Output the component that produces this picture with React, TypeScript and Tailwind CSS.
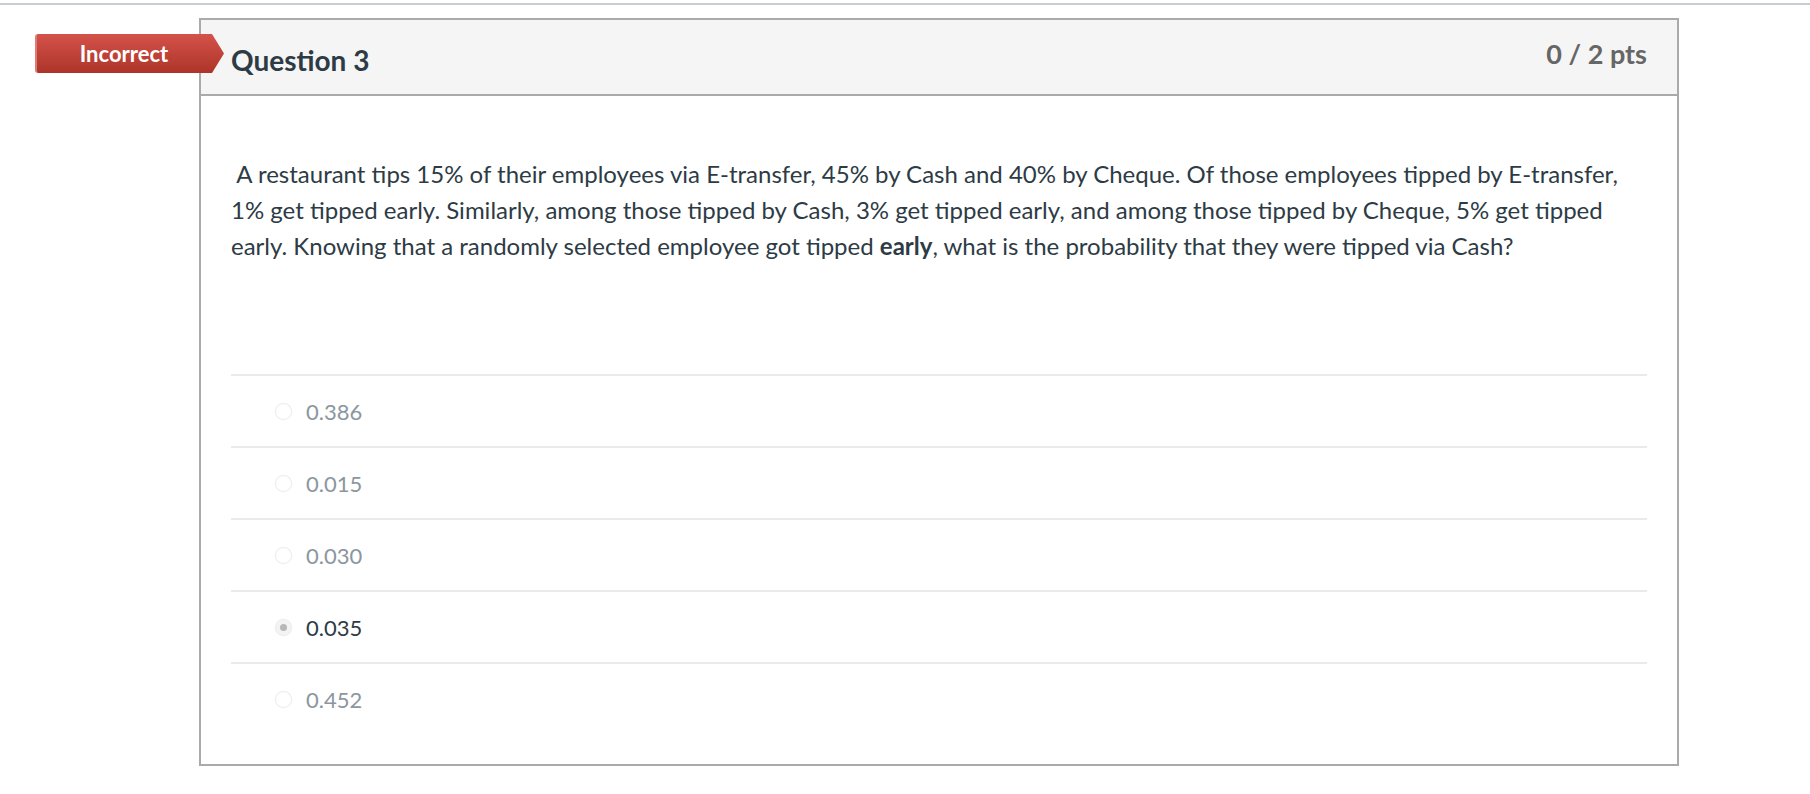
import React from "react";

const answers = [
  { v: "0.386", sel: false },
  { v: "0.015", sel: false },
  { v: "0.030", sel: false },
  { v: "0.035", sel: true },
  { v: "0.452", sel: false },
];

export default function App() {
  return (
    <div className="w-[1810px] h-[794px] bg-white overflow-hidden" style={{ fontFamily: "Lato, 'Open Sans', sans-serif" }}>
      <div className="mt-[3px] h-[2px] bg-[#c7cdd1]" />
      <div className="relative ml-[199px] mt-[13px] w-[1480px] h-[748px] border-2 border-[#aaaaaa] flex flex-col">
        <div className="absolute left-[-166px] top-[14px] flex items-stretch h-[39px] z-10">
          <div className="w-[176px] rounded-l-[3px] bg-gradient-to-b from-[#d4524a] to-[#ad3429] border-l-[2px] border-[#e07a73] flex items-center justify-center text-white font-bold text-[22px]">
            Incorrect
          </div>
          <svg width="13" height="39" viewBox="0 0 13 39" className="block">
            <defs>
              <linearGradient id="g" x1="0" y1="0" x2="0" y2="1">
                <stop offset="0" stopColor="#d4524a" />
                <stop offset="1" stopColor="#ad3429" />
              </linearGradient>
            </defs>
            <polygon points="0,0 1,0 13,19.5 1,39 0,39" fill="url(#g)" />
          </svg>
        </div>
        <div className="shrink-0 h-[76px] bg-[#f5f5f5] border-b-2 border-[#aaaaaa] flex items-start justify-between pl-[30px] pr-[30px]">
          <div className="mt-[22px] text-[28px] font-bold text-[#2d3b45] leading-[36px]">Question 3</div>
          <div className="mt-[16px] text-[27px] font-bold text-[#666666] leading-[36px]">0 / 2 pts</div>
        </div>
        <div className="px-[30px] pt-[60px] flex-1">
          <p className="text-[24px] leading-[36px] text-[#2d3b45] whitespace-nowrap">
            &nbsp;A restaurant tips 15% of their employees via E-transfer, 45% by Cash and 40% by Cheque. Of those employees tipped by E-transfer,
            <br />
            1% get tipped early. Similarly, among those tipped by Cash, 3% get tipped early, and among those tipped by Cheque, 5% get tipped
            <br />
            early. Knowing that a randomly selected employee got tipped <b>early</b>, what is the probability that they were tipped via Cash?
          </p>
          <div className="mt-[110px]">
            {answers.map((a) => (
              <div key={a.v} className="h-[72px] border-t-2 border-[#e8eaec] flex items-center">
                <div className={`ml-[44px] w-[17px] h-[17px] rounded-full border border-[#eeeeee] shadow-[0_0_1px_rgba(0,0,0,0.08)] flex items-center justify-center ${a.sel ? "bg-[#f3f3f3]" : "bg-white"}`}>
                  {a.sel && <div className="w-[7px] h-[7px] rounded-full bg-[#b8b8b8]" />}
                </div>
                <div className={`ml-[14px] text-[22px] ${a.sel ? "text-[#2d3b45]" : "text-[#8b969e]"}`}>{a.v}</div>
              </div>
            ))}
          </div>
        </div>
      </div>
    </div>
  );
}
